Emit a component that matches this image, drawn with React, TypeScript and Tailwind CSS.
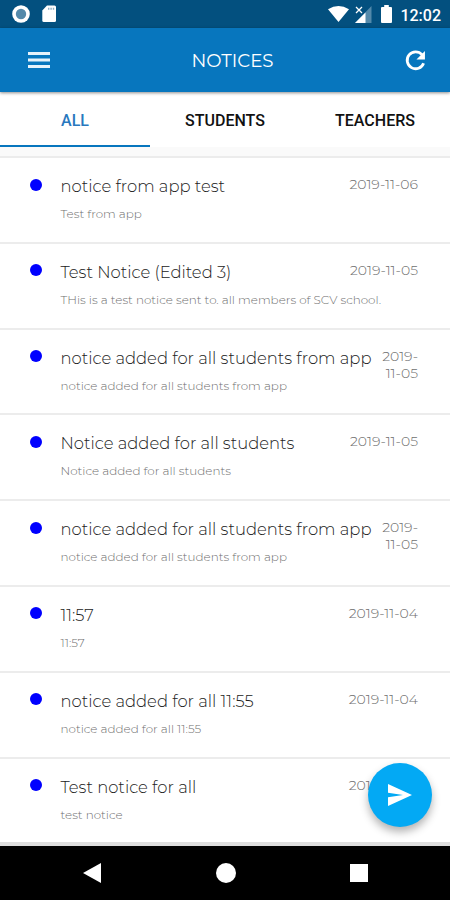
interface Notice {
  title: string;
  description: string;
  date: string;
}

const tabs = ["ALL", "STUDENTS", "TEACHERS"];

const notices: Notice[] = [
  {
    title: "notice from app test",
    description: "Test from app",
    date: "2019-11-06",
  },
  {
    title: "Test Notice (Edited 3)",
    description: "THis is a test notice sent to. all members of SCV school.",
    date: "2019-11-05",
  },
  {
    title: "notice added for all students from app",
    description: "notice added for all students from app",
    date: "2019-11-05",
  },
  {
    title: "Notice added for all students",
    description: "Notice added for all students",
    date: "2019-11-05",
  },
  {
    title: "notice added for all students from app",
    description: "notice added for all students from app",
    date: "2019-11-05",
  },
  {
    title: "11:57",
    description: "11:57",
    date: "2019-11-04",
  },
  {
    title: "notice added for all 11:55",
    description: "notice added for all 11:55",
    date: "2019-11-04",
  },
  {
    title: "Test notice for all",
    description: "test notice",
    date: "2019-11-04",
  },
];

const StatusBar = () => {
  return (
    <div className="flex h-7 shrink-0 items-center bg-[#03507f] text-white">
      <svg className="ml-3 size-[18px]" viewBox="0 0 18 18">
        <circle cx="9" cy="9" r="8.8" fill="#fff" />
        <circle cx="9" cy="9" r="5.2" fill="#5389aa" />
      </svg>
      <svg className="ml-3 h-[18px] w-[15px]" viewBox="0 0 15 18">
        <path
          d="M5 .5H12.5Q14 .5 14 2V15.5Q14 17 12.5 17H1.8Q.3 17 .3 15.5V5.5Z"
          fill="#fff"
        />
        <path d="M6 2.7h1.4v2H6zM8.4 2.7h1.4v2H8.4zM10.8 2.7h1.4v2h-1.4z" fill="#8fb0c5" />
      </svg>
      <div className="ml-auto flex items-center">
        <svg className="h-4 w-[21px]" viewBox="0 0 21 16" fill="#fff">
          <path d="M0 3.2Q10.5-3.2 21 3.2L10.5 16Z" />
        </svg>
        <svg className="ml-[6px] h-[17px] w-[17px]" viewBox="0 0 17 17">
          <path d="M16.5 0V17H0Z" fill="#5389aa" />
          <path d="M10.5 6.5V17H0Z" fill="#fff" />
          <path d="M1 1l6 6m0-6l-6 6" stroke="#fff" strokeWidth="1.3" />
        </svg>
        <svg className="ml-[9px] h-[18px] w-[11px]" viewBox="0 0 11 18" fill="#fff">
          <path d="M3.2 0H7.8V2H10Q11 2 11 3V17Q11 18 10 18H1Q0 18 0 17V3Q0 2 1 2H3.2Z" />
        </svg>
      </div>
      <span className="mr-[9px] ml-[8px] pt-[3px] font-[Roboto,sans-serif] text-[16px] font-medium">
        12:02
      </span>
    </div>
  );
};

const Header = () => {
  return (
    <header className="z-10 flex h-16 shrink-0 items-center justify-between bg-[#0776be] pr-[20px] pl-[28px] text-white shadow-[0_1px_3px_rgba(0,0,0,0.45)]">
      <svg className="h-4 w-[22px]" viewBox="0 0 22 16" fill="#e6f2fb">
        <path d="M0 0H22V3H0zM0 6.5H22V9.5H0zM0 13H22V16H0z" />
      </svg>
      <h1 className="pt-[2px] pl-[14px] text-[18.2px] font-normal">NOTICES</h1>
      <svg className="size-[29px]" viewBox="0 0 24 24" fill="none">
        <path
          d="M17.4 7.2A7 7 0 1 0 18.7 14.2"
          stroke="#fff"
          strokeWidth="2.3"
        />
        <path d="M19.8 4.2V11.2H12.8Z" fill="#fff" />
      </svg>
    </header>
  );
};

const NoticeRow = ({ notice }: { notice: Notice }) => {
  return (
    <li className="flex h-[85.8px] shrink-0 border-t-2 border-[#ececec] bg-white pt-[15px] pr-8 pl-[30px]">
      <span className="mt-[5.5px] size-[12px] shrink-0 rounded-full bg-[#0000ff]" />
      <div className="ml-[18.5px] w-[312px] shrink-0 whitespace-nowrap">
        <p className="mt-[1px] text-[16.4px] leading-6 font-light text-[#222]">
          {notice.title}
        </p>
        <p className="mt-[8px] text-[11.95px] leading-4 font-light text-[#6f6f6f]">
          {notice.description}
        </p>
      </div>
      <div className="flex min-w-0 flex-1 justify-end">
        <p
          className={`mt-[3px] shrink-0 text-right text-[14px] leading-[17px] font-light text-[#6f6f6f] ${
            notice.title.length > 30 ? "w-10" : "whitespace-nowrap"
          }`}
        >
          {notice.date}
        </p>
      </div>
    </li>
  );
};

const NavigationBar = () => {
  return (
    <nav className="z-10 flex h-[54px] shrink-0 items-center justify-between bg-black pr-[82px] pl-[83px]">
      <svg className="h-5 w-[18px]" viewBox="0 0 18 20" fill="#fff">
        <path d="M18 0V20L0 10Z" />
      </svg>
      <span className="size-5 rounded-full bg-white" />
      <span className="size-[18px] bg-white" />
    </nav>
  );
};

const App = () => {
  return (
    <div className="relative flex h-[900px] w-[450px] flex-col overflow-hidden bg-[#fafafa] font-[Montserrat,sans-serif]">
      <StatusBar />
      <Header />
      <div className="grid h-[55px] shrink-0 grid-cols-3 bg-white font-[Roboto,sans-serif] text-[16px] font-medium">
        {tabs.map((tab, index) => (
          <button
            key={tab}
            className={`border-b-2 pt-[4px] ${
              index === 0
                ? "border-[#0776be] text-[#2878be]"
                : "border-transparent text-[#111]"
            }`}
          >
            {tab}
          </button>
        ))}
      </div>
      <ul className="mt-[9px] flex min-h-0 flex-1 flex-col overflow-hidden">
        {notices.map((notice, index) => (
          <NoticeRow key={index} notice={notice} />
        ))}
        <li className="h-1 shrink-0 bg-[#dedede]" />
      </ul>
      <NavigationBar />
      <button className="absolute top-[763px] left-[368px] z-20 flex size-16 items-center justify-center rounded-full bg-[#03a9f4] shadow-[0_5px_8px_rgba(0,0,0,0.3)]">
        <svg className="h-[22px] w-6" viewBox="0 0 24 22" fill="#fff">
          <path d="M0 0L24 11L0 22V13.3L15 11L0 8.7Z" />
        </svg>
      </button>
    </div>
  );
};

export default App;
